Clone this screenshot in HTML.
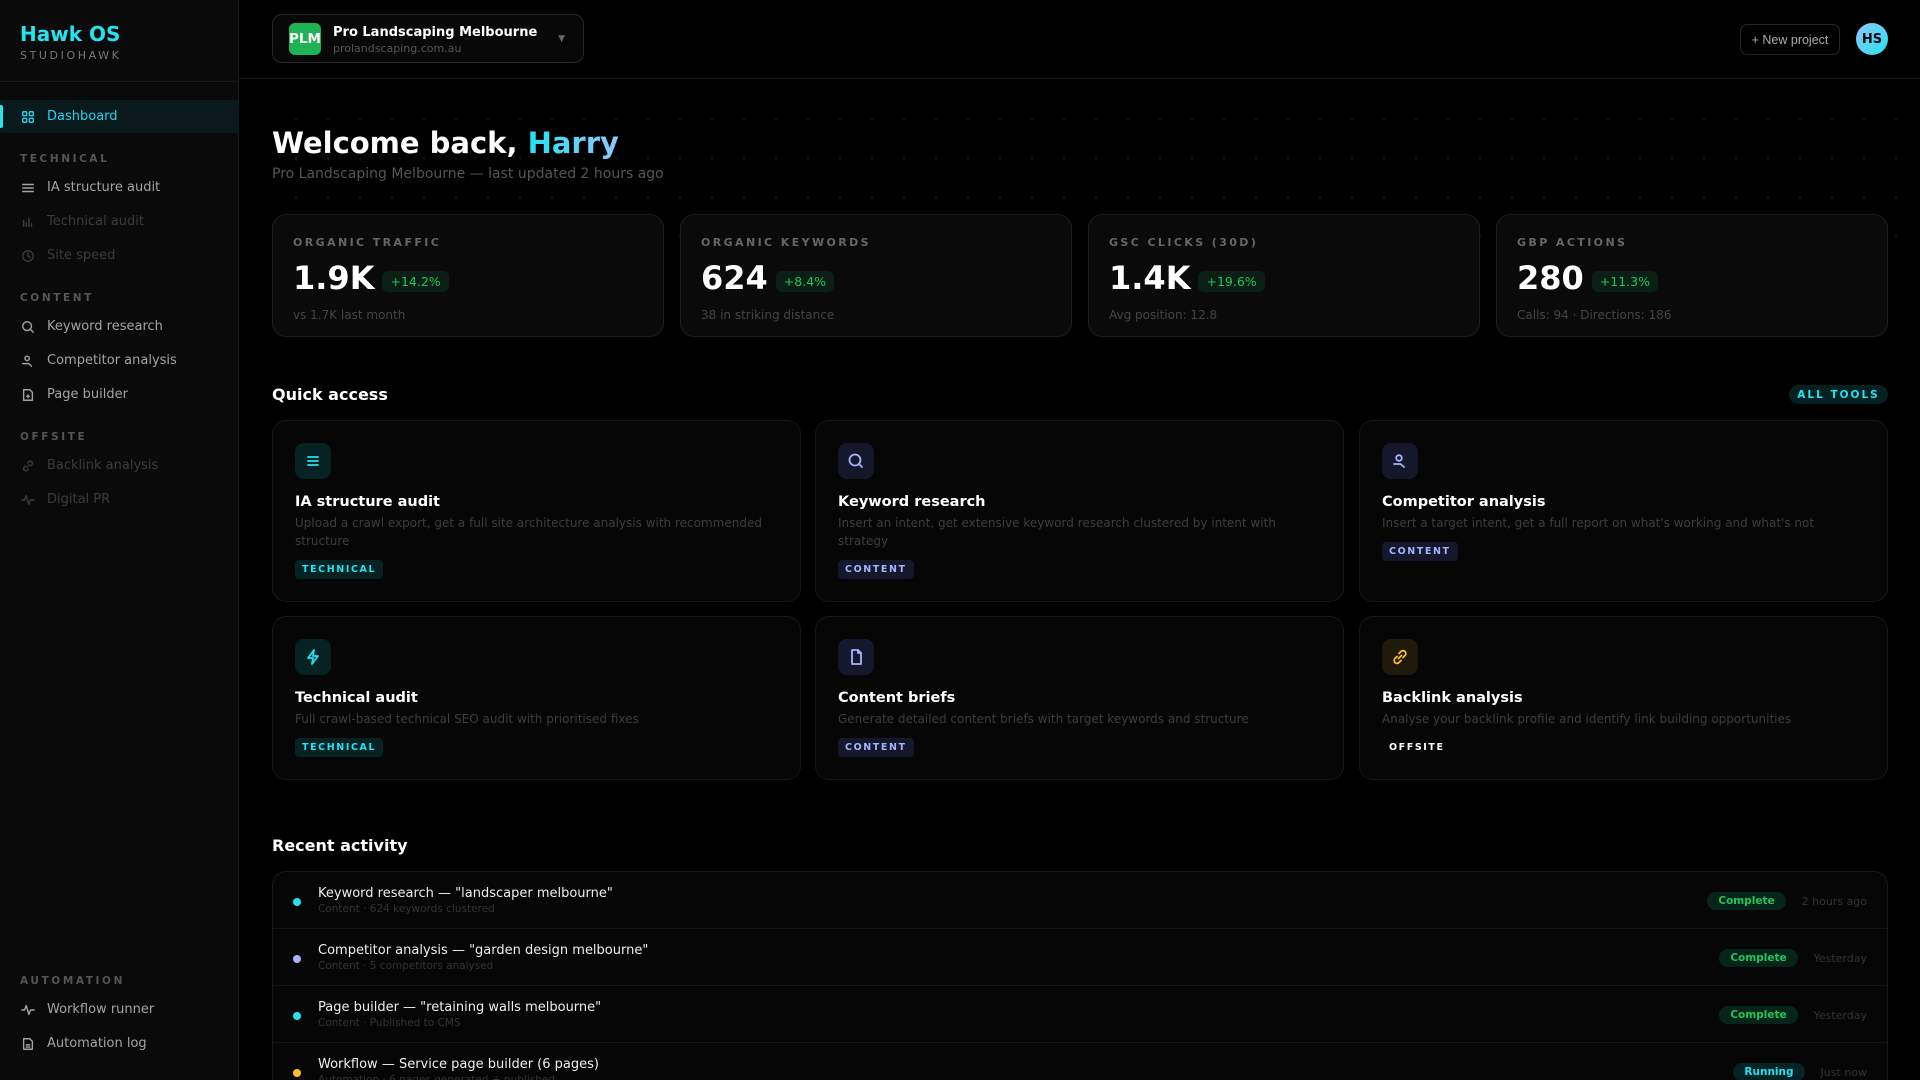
<!DOCTYPE html>
<html><head><meta charset="utf-8"><style>
*{box-sizing:border-box;margin:0;padding:0}
html,body{width:1920px;height:1080px;overflow:hidden}
body{background:#000;font-family:"DejaVu Sans","Liberation Sans",sans-serif;color:#fff;position:relative}
.side{position:absolute;left:0;top:0;width:239px;height:1080px;background:#0a0a0a;border-right:1px solid #1a1a1a}
.logo{height:82px;border-bottom:1px solid #1a1a1a;padding:22px 0 0 20px}
.logo h1{font-size:20px;color:#22e3f0;font-weight:bold;line-height:24px}
.logo div{font-size:11px;letter-spacing:2.6px;color:#777;margin-top:3px}
.nav{position:absolute;left:0;width:239px;height:33px;display:flex;align-items:center;padding-left:21px;font-size:13px;color:#a3a3a3}
.nav svg{width:14px;height:14px;margin-right:12px;fill:none;stroke:currentColor;stroke-width:1.6;stroke-linecap:round;stroke-linejoin:round}
.nav.dis{color:#3b3b3b}
.nav.act{background:#0a1a1c;color:#22d3ee}
.nav.act:before{content:"";position:absolute;left:0;top:5px;width:3px;height:23px;background:#22e3f0;border-radius:0 2px 2px 0}
.sec{position:absolute;left:20px;font-size:10.5px;font-weight:bold;letter-spacing:2.6px;color:#555}
.top{position:absolute;left:239px;top:0;right:0;height:79px;border-bottom:1px solid #1a1a1a}
.dots{position:absolute;left:272px;top:100px;right:0;height:160px;background-image:radial-gradient(circle,#0a1f19 1px,transparent 1.3px);background-size:32px 39px;background-position:8px 0}
.sel{position:absolute;left:272px;top:14px;width:312px;height:49px;border:1px solid #262626;border-radius:10px;background:#080808}
.plm{position:absolute;left:16px;top:8px;width:32px;height:32px;border-radius:6px;background:#1eb356;font-weight:bold;font-size:13.5px;display:flex;align-items:center;justify-content:center}
.sel b{position:absolute;left:60px;top:10px;font-size:13px}
.sel i{position:absolute;left:60px;top:27px;font-size:11px;font-style:normal;color:#555}
.sel span{position:absolute;right:18px;top:19px;font-size:9px;color:#666}
.np{position:absolute;left:1740px;top:24px;width:100px;height:31px;border:1px solid #262626;border-radius:7px;font-family:"Liberation Sans",sans-serif;font-size:12.5px;color:#aaa;display:flex;align-items:center;justify-content:center}
.av{position:absolute;left:1856px;top:23px;width:32px;height:32px;border-radius:50%;background:linear-gradient(135deg,#93c5fd,#22e3f0);color:#0a0a0a;font-weight:bold;font-size:13px;display:flex;align-items:center;justify-content:center}
h2{position:absolute;left:272px;top:126px;font-size:29px;font-weight:bold}
h2 span{background:linear-gradient(90deg,#22e3f0,#93c5fd);-webkit-background-clip:text;color:transparent}
.subt{position:absolute;left:272px;top:166px;font-size:14px;color:#555}
.stat{position:absolute;top:214px;width:392px;height:123px;background:#0a0a0a;border:1px solid #1c1c1c;border-radius:14px;padding:21px 0 0 20px}
.stat .l{font-size:11px;font-weight:bold;letter-spacing:2.4px;color:#666}
.stat .v{margin-top:8px;display:flex;align-items:center;font-size:32px;font-weight:bold;height:42px}
.stat .v span{font-size:12.5px;font-weight:normal;color:#22c55e;background:#0b1f17;border-radius:6px;padding:3px 8px;margin-left:8px;margin-top:6px}
.stat .s{font-size:12px;color:#444;margin-top:9px}
.h3{position:absolute;left:272px;font-size:16px;font-weight:bold}
.all{position:absolute;left:1789px;top:385px;width:99px;height:19px;border-radius:10px;background:#052122;color:#22e3f0;font-size:10.5px;font-weight:bold;letter-spacing:2px;display:flex;align-items:center;justify-content:center}
.card{position:absolute;width:529px;background:#060606;border:1px solid #171717;border-radius:14px;padding:22px 0 0 22px}
.ic{width:36px;height:36px;border-radius:9px;display:flex;align-items:center;justify-content:center}
.ic svg{width:18px;height:18px;fill:none;stroke:currentColor;stroke-width:1.8;stroke-linecap:round;stroke-linejoin:round}
.tq{background:#062222;color:#22e3f0}.pu{background:#16172a;color:#a5b4fc}.ye{background:#1f1a0c;color:#fbbf24}
.card h4{font-size:14.5px;font-weight:bold;margin-top:15px}
.card p{font-size:12px;color:#3d3d3d;line-height:18px;margin-top:4px;padding-right:20px}
.tag{display:inline-block;margin-top:10px;font-size:9.5px;font-weight:bold;letter-spacing:1.6px;padding:4px 7px;border-radius:4px}
.t1{background:#062222;color:#22e3f0}.t2{background:#15172a;color:#a5b4fc}.t3{color:#fff}
.list{position:absolute;left:272px;top:871px;width:1616px;height:240px;background:#060606;border:1px solid #171717;border-radius:14px;overflow:hidden}
.row{height:57px;border-bottom:1px solid #141414;position:relative}
.row .d{position:absolute;left:20px;top:26px;width:8px;height:8px;border-radius:50%}
.row b{position:absolute;left:45px;top:14px;font-size:13px;font-weight:normal;color:#eee}
.row i{position:absolute;left:45px;top:31px;font-size:10.5px;font-style:normal;color:#333}
.row .r{position:absolute;right:20px;top:20px;display:flex;align-items:center;font-size:11px;color:#333}
.row .r span{font-weight:bold;font-size:10.5px;color:#22c55e;background:#06251a;border-radius:9px;padding:3px 11px;margin-right:16px}
</style></head><body>
<div class="side">
<div class="logo"><h1>Hawk OS</h1><div>STUDIOHAWK</div></div>
<div class="nav act" style="top:100px"><svg viewBox="0 0 16 16"><rect x="2" y="2" width="4.5" height="4.5" rx="1"/><rect x="9.5" y="2" width="4.5" height="4.5" rx="1"/><rect x="2" y="9.5" width="4.5" height="4.5" rx="1"/><rect x="9.5" y="9.5" width="4.5" height="4.5" rx="1"/></svg>Dashboard</div>
<div class="sec" style="top:153px">TECHNICAL</div>
<div class="nav" style="top:171px"><svg viewBox="0 0 16 16"><path d="M2 4h12M2 8h12M2 12h12"/></svg>IA structure audit</div>
<div class="nav dis" style="top:205px"><svg viewBox="0 0 16 16"><path d="M3 13V6M6 13V9M9 13V4M12 13v-3"/></svg>Technical audit</div>
<div class="nav dis" style="top:239px"><svg viewBox="0 0 16 16"><circle cx="8" cy="8" r="6"/><path d="M8 4.5V8l2 1.5"/></svg>Site speed</div>
<div class="sec" style="top:292px">CONTENT</div>
<div class="nav" style="top:310px"><svg viewBox="0 0 16 16"><circle cx="7" cy="7" r="5"/><path d="M11 11l3 3"/></svg>Keyword research</div>
<div class="nav" style="top:344px"><svg viewBox="0 0 16 16"><circle cx="7" cy="5" r="2.5"/><path d="M2 11h7l3 3"/></svg>Competitor analysis</div>
<div class="nav" style="top:378px"><svg viewBox="0 0 16 16"><path d="M3 2h7l3 3v9H3z"/><path d="M8 8v3M6.5 9.5h3"/></svg>Page builder</div>
<div class="sec" style="top:431px">OFFSITE</div>
<div class="nav dis" style="top:449px"><svg viewBox="0 0 16 16"><path d="M6.5 9.5l3-3M5 8l-1.5 1.5a2.5 2.5 0 003.5 3.5L8.5 11.5M11 8l1.5-1.5A2.5 2.5 0 009 3L7.5 4.5"/></svg>Backlink analysis</div>
<div class="nav dis" style="top:483px"><svg viewBox="0 0 16 16"><path d="M1 8h3l2-5 3 10 2-5h4"/></svg>Digital PR</div>
<div class="sec" style="top:975px">AUTOMATION</div>
<div class="nav" style="top:993px"><svg viewBox="0 0 16 16"><path d="M1 8h3l2-5 3 10 2-5h4"/></svg>Workflow runner</div>
<div class="nav" style="top:1027px"><svg viewBox="0 0 16 16"><path d="M3 2h7l3 3v9H3z"/><path d="M6 9h4M6 11.5h4"/></svg>Automation log</div>
</div>
<div class="top"></div>
<div class="dots"></div>
<div class="sel"><div class="plm">PLM</div><b>Pro Landscaping Melbourne</b><i>prolandscaping.com.au</i><span>▼</span></div>
<div class="np">+ New project</div>
<div class="av">HS</div>
<h2>Welcome back, <span>Harry</span></h2>
<div class="subt">Pro Landscaping Melbourne — last updated 2 hours ago</div>
<div class="stat" style="left:272px"><div class="l">ORGANIC TRAFFIC</div><div class="v">1.9K<span>+14.2%</span></div><div class="s">vs 1.7K last month</div></div>
<div class="stat" style="left:680px"><div class="l">ORGANIC KEYWORDS</div><div class="v">624<span>+8.4%</span></div><div class="s">38 in striking distance</div></div>
<div class="stat" style="left:1088px"><div class="l">GSC CLICKS (30D)</div><div class="v">1.4K<span>+19.6%</span></div><div class="s">Avg position: 12.8</div></div>
<div class="stat" style="left:1496px"><div class="l">GBP ACTIONS</div><div class="v">280<span>+11.3%</span></div><div class="s">Calls: 94 · Directions: 186</div></div>
<div class="h3" style="top:385px">Quick access</div>
<div class="all">ALL TOOLS</div>
<div class="card" style="left:272px;top:420px;height:182px"><div class="ic tq"><svg viewBox="0 0 18 18"><path d="M4 5h10M4 9h10M4 13h10"/></svg></div><h4>IA structure audit</h4><p>Upload a crawl export, get a full site architecture analysis with recommended structure</p><span class="tag t1">TECHNICAL</span></div>
<div class="card" style="left:815px;top:420px;height:182px"><div class="ic pu"><svg viewBox="0 0 18 18"><circle cx="8" cy="8" r="5.5"/><path d="M12 12l3 3"/></svg></div><h4>Keyword research</h4><p>Insert an intent, get extensive keyword research clustered by intent with strategy</p><span class="tag t2">CONTENT</span></div>
<div class="card" style="left:1359px;top:420px;height:182px"><div class="ic pu"><svg viewBox="0 0 18 18"><circle cx="8" cy="6" r="2.8"/><path d="M3 12h6.5l3.5 3"/></svg></div><h4>Competitor analysis</h4><p>Insert a target intent, get a full report on what's working and what's not</p><span class="tag t2">CONTENT</span></div>
<div class="card" style="left:272px;top:616px;height:164px"><div class="ic tq"><svg viewBox="0 0 18 18"><path d="M10 2L4 10h5l-1 6 6-8H9z"/></svg></div><h4>Technical audit</h4><p>Full crawl-based technical SEO audit with prioritised fixes</p><span class="tag t1">TECHNICAL</span></div>
<div class="card" style="left:815px;top:616px;height:164px"><div class="ic pu"><svg viewBox="0 0 18 18"><path d="M5 2h6l3 3v11H5z"/><path d="M11 2v3h3"/></svg></div><h4>Content briefs</h4><p>Generate detailed content briefs with target keywords and structure</p><span class="tag t2">CONTENT</span></div>
<div class="card" style="left:1359px;top:616px;height:164px"><div class="ic ye"><svg viewBox="0 0 18 18"><path d="M7.5 10.5l3-3M6 8.5l-2 2a2.8 2.8 0 004 4l2-2M12 9.5l2-2a2.8 2.8 0 00-4-4l-2 2"/></svg></div><h4>Backlink analysis</h4><p>Analyse your backlink profile and identify link building opportunities</p><span class="tag t3">OFFSITE</span></div>
<div class="h3" style="top:836px">Recent activity</div>
<div class="list">
<div class="row"><div class="d" style="background:#22e3f0"></div><b>Keyword research — "landscaper melbourne"</b><i>Content · 624 keywords clustered</i><div class="r"><span>Complete</span>2 hours ago</div></div>
<div class="row"><div class="d" style="background:#a5b4fc"></div><b>Competitor analysis — "garden design melbourne"</b><i>Content · 5 competitors analysed</i><div class="r"><span>Complete</span>Yesterday</div></div>
<div class="row"><div class="d" style="background:#22e3f0"></div><b>Page builder — "retaining walls melbourne"</b><i>Content · Published to CMS</i><div class="r"><span>Complete</span>Yesterday</div></div>
<div class="row"><div class="d" style="background:#fbbf24"></div><b>Workflow — Service page builder (6 pages)</b><i>Automation · 6 pages generated + published</i><div class="r"><span style="color:#22e3f0;background:#052224">Running</span>Just now</div></div>
</div>
</body></html>
